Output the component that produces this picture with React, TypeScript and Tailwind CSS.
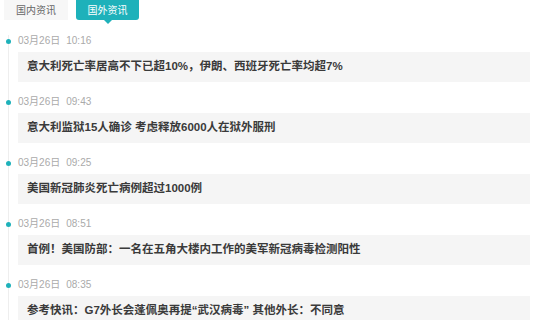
const items = [
  { date: "03月26日", time: "10:16", title: "意大利死亡率居高不下已超10%，伊朗、西班牙死亡率均超7%" },
  { date: "03月26日", time: "09:43", title: "意大利监狱15人确诊 考虑释放6000人在狱外服刑" },
  { date: "03月26日", time: "09:25", title: "美国新冠肺炎死亡病例超过1000例" },
  { date: "03月26日", time: "08:51", title: "首例！美国防部：一名在五角大楼内工作的美军新冠病毒检测阳性" },
  { date: "03月26日", time: "08:35", title: "参考快讯：G7外长会蓬佩奥再提“武汉病毒” 其他外长：不同意" },
];

export default function App() {
  return (
    <div
      className="relative h-[320px] w-[540px] overflow-hidden bg-white"
      style={{ fontFamily: '"Liberation Sans", "Noto Sans CJK SC", sans-serif' }}
    >
      <div className="flex h-[20px] items-stretch gap-[8px] pl-[4px]">
        <div className="flex w-[64px] items-center justify-center bg-[#f7f7f7] text-[10px] text-[#666]">
          国内资讯
        </div>
        <div className="relative flex w-[63px] items-center justify-center rounded-b-[3px] bg-[#1eb1ba] text-[10px] text-white">
          国外资讯
          <span className="absolute left-1/2 top-full -translate-x-1/2 border-x-[4px] border-t-[4px] border-x-transparent border-t-[#1eb1ba]" />
        </div>
      </div>

      <div className="relative ml-[8px] mt-[15px] border-l border-[#eeeeee] pr-[10px]">
        {items.map((item) => (
          <div key={item.time} className="relative mb-[14px]">
            <span className="absolute left-[-3px] top-[4px] h-[5px] w-[5px] rounded-full bg-[#1eb1ba]" />
            <div className="flex h-[12px] items-center gap-[6px] pl-[9px] text-[10px] leading-[12px] text-[#aaa]">
              <span>{item.date}</span>
              <span>{item.time}</span>
            </div>
            <div className="ml-[9px] mt-[5px] flex h-[30px] items-center bg-[#f5f5f5] pl-[9px] text-[11.5px] font-bold text-[#3a3a3a]">
              {item.title}
            </div>
          </div>
        ))}
      </div>
    </div>
  );
}
